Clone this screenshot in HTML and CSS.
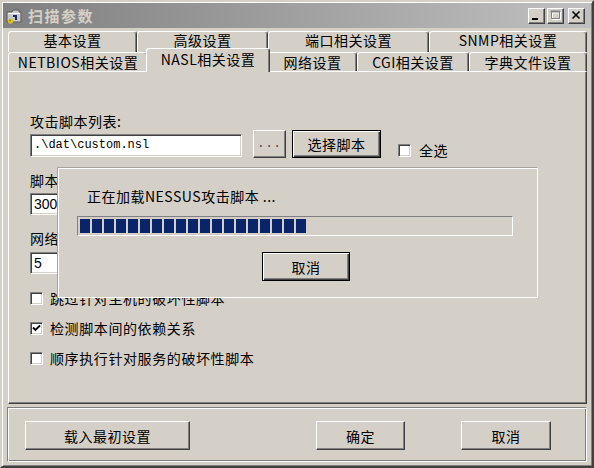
FILE: index.html
```html
<!DOCTYPE html>
<html lang="zh-CN">
<head>
    <meta charset="UTF-8">
    <title>扫描参数</title>
    <link rel="stylesheet" href="styles.css">
</head>
<body>
<div class="win">
    <div class="caption">
        <svg class="app-icon" width="16" height="16" viewBox="0 0 16 16">
            <path d="M1 4 L6 4 L7 2 L13 2 L13 4 L15 4 L15 14 L1 14 Z" fill="#c8c8c8" stroke="#5a5a5a" stroke-width="1"/>
            <rect x="2" y="5" width="12" height="1" fill="#ffffff"/>
            <path d="M7 7 L11 7 L11 12 L9 12 L9 9 L7 9 Z" fill="#1c2a6a"/>
            <circle cx="4.5" cy="13" r="2.6" fill="#e2c21c"/>
            <circle cx="4" cy="12.4" r="1" fill="#7a9a20"/>
        </svg>
        <span class="caption-text">扫描参数</span>
        <div class="caption-btns">
            <span class="cbtn">
                <svg width="15" height="14" viewBox="0 0 15 14"><rect x="3" y="9" width="6" height="2" fill="#000"/></svg>
            </span>
            <span class="cbtn">
                <svg width="15" height="14" viewBox="0 0 15 14">
                    <path d="M4.5 3.5 h8 v7 h-8 Z M4 3 h9 v1 h-9 Z" fill="none" stroke="#ffffff" stroke-width="1"/>
                    <path d="M3.5 2.5 h8 v7 h-8 Z M3 2 h9 v1 h-9 Z" fill="none" stroke="#808080" stroke-width="1"/>
                </svg>
            </span>
            <span class="cbtn close">
                <svg width="15" height="14" viewBox="0 0 15 14"><path d="M3.5 2.5 L10.5 9.5 M10.5 2.5 L3.5 9.5" stroke="#000" stroke-width="1.7"/></svg>
            </span>
        </div>
    </div>

    <div class="client">
        <div class="tabrow back">
            <div class="tab">基本设置</div>
            <div class="tab">高级设置</div>
            <div class="tab">端口相关设置</div>
            <div class="tab">SNMP相关设置</div>
        </div>
        <div class="tabrow front">
            <div class="tab">NETBIOS相关设置</div>
            <div class="tab sel">NASL相关设置</div>
            <div class="tab">网络设置</div>
            <div class="tab">CGI相关设置</div>
            <div class="tab">字典文件设置</div>
        </div>

        <div class="panel">
            <div class="lbl">攻击脚本列表:</div>
            <div class="script-row">
                <div class="edit path">.\dat\custom.nsl</div>
                <div class="btn dots">...</div>
                <div class="btn default choose">选择脚本</div>
                <div class="chk all"><span class="box"></span>全选</div>
            </div>
            <div class="lbl gap-a">脚本超时(秒):</div>
            <div class="edit num first">300</div>
            <div class="lbl gap-b">网络超时(秒):</div>
            <div class="edit num second">5</div>
            <div class="checks">
                <div class="chk"><span class="box"></span>跳过针对主机的破坏性脚本</div>
                <div class="chk"><span class="box"><svg width="9" height="9" viewBox="0 0 9 9"><path d="M1 3.5 L3.5 6 L8 1.5" fill="none" stroke="#000" stroke-width="1.8"/></svg></span>检测脚本间的依赖关系</div>
                <div class="chk"><span class="box"></span>顺序执行针对服务的破坏性脚本</div>
            </div>

            <div class="loading">
                <div class="loading-text">正在加载NESSUS攻击脚本 ...</div>
                <div class="progress"><div class="progress-fill" style="width:228px"></div></div>
                <div class="btn default cancel">取消</div>
            </div>
        </div>

        <div class="footer">
            <div class="btn reset">载入最初设置</div>
            <div class="btn ok">确定</div>
            <div class="btn quit">取消</div>
        </div>
    </div>
</div>
</body>
</html>
```

FILE: styles.css
```css
* {margin:0; padding:0; box-sizing:border-box;}

body {background:#d4d0c8; font-family:"Noto Sans CJK SC", "Liberation Sans", sans-serif; font-size:14px; color:#000;}

/* window frame */
.win {width:594px; height:468px; padding:1px; background:#d4d0c8;
    border:2px solid; border-color:#d4d0c8 #404040 #404040 #d4d0c8;
    box-shadow:inset 1px 1px #fff, inset -1px -1px #808080;}

.caption {height:25px; display:flex; align-items:center; padding:0 6px 0 3px;
    background:linear-gradient(to right, #808080, #c0c0c0);}
.app-icon {display:block; margin-top:1px;}
.caption-text {margin-left:6px; font-size:15px; font-weight:bold; line-height:25px; color:#d4d0c8; letter-spacing:1.5px;}
.caption-btns {margin-left:auto; display:flex;}
.cbtn {width:17px; height:16px; margin-left:2px; background:#d4d0c8;
    border:1px solid; border-color:#fff #404040 #404040 #fff; box-shadow:inset -1px -1px #808080;}
.cbtn svg {display:block;}
.cbtn.close {margin-left:4px;}

.client {padding:3px 4px 0 5px;}

/* tabs */
.tabrow {display:grid;}
.tabrow.back {grid-template-columns:129px 131px 161px 158px; height:21px;}
.tabrow.front {grid-template-columns:140px 120px 89px 112px 118px; height:19px;}
.tab {display:flex; align-items:center; justify-content:center; white-space:nowrap;
    letter-spacing:0.5px; background:#d4d0c8;
    border-top:1px solid #fff; border-left:1px solid #fff; border-right:1px solid #404040;
    border-radius:3px 3px 0 0; box-shadow:inset -1px 0 #808080;}
.back .tab {line-height:14px; padding-bottom:4px;}
.front .tab {line-height:17px;}
.tab.sel {position:relative; z-index:2; margin:-4px -2px -1px; padding-bottom:3px;}

/* page */
.panel {position:relative; height:333px; padding:41px 0 0 21px;
    border:1px solid; border-color:#fff #404040 #404040 #fff; box-shadow:inset -1px -1px #808080;}

.lbl {line-height:17px; letter-spacing:0.5px;}
.gap-a {margin-top:14px;}
.gap-b {margin-top:15px;}

.edit {background:#fff; border:1px solid; border-color:#808080 #fff #fff #808080;
    box-shadow:inset 1px 1px #404040, inset -1px -1px #d4d0c8;}
.path {width:212px; height:23px; margin-top:4px; padding-left:3px;
    font-family:"Liberation Mono", monospace; font-size:12px; line-height:21px;}
.num {width:60px; height:22px; padding-left:3px; font-family:"Liberation Sans", sans-serif; line-height:20px;}
.num.first {margin-top:4px;}
.num.second {margin-top:5px;}

.script-row {display:flex; align-items:flex-start; height:28px;}

.btn {display:flex; align-items:center; justify-content:center; background:#d4d0c8; letter-spacing:0.5px;
    border:1px solid; border-color:#fff #404040 #404040 #fff; box-shadow:inset -1px -1px #808080;}
.btn.default {border-color:#000; box-shadow:inset 1px 1px #fff, inset -1px -1px #404040, inset -2px -2px #808080;}
.dots {width:33px; height:28px; margin-left:11px; font-family:"Liberation Mono", monospace; font-size:12px; color:#404040; letter-spacing:1px;}
.choose {width:89px; height:28px; margin-left:6px;}

.chk {display:flex; align-items:center; gap:7px; line-height:16px; letter-spacing:0.6px; white-space:nowrap;}
.chk.all {margin:12px 0 0 17px; gap:8px;}
.box {width:13px; height:13px; flex:none; display:flex; align-items:center; justify-content:center; background:#fff;
    border:1px solid; border-color:#808080 #fff #fff #808080; box-shadow:inset 1px 1px #404040, inset -1px -1px #d4d0c8;}
.box svg {display:block;}
.checks {margin-top:16px; display:flex; flex-direction:column; gap:14px;}

/* loading dialog lying over the page */
.loading {position:absolute; left:49px; top:96px; width:480px; height:130px; padding:19px 0 0 18px;
    background:#d4d0c8; border:1px solid #fff; box-shadow:-1px -1px 0 #a8a49c;}
.loading-text {margin-left:10px; line-height:16px; letter-spacing:0.5px;}
.progress {width:436px; height:20px; margin-top:12px; padding:2px 0 2px 2px;
    border:1px solid; border-color:#808080 #fff #fff #808080;}
.progress-fill {height:100%; background:repeating-linear-gradient(to right, #0a246a 0 10px, transparent 10px 12px);}
.cancel {width:88px; height:29px; margin:16px 0 0 185px;}

/* bottom buttons */
.footer {display:flex; width:580px; height:55px; margin:3px 0 0 -1px; padding:13px 0 0 17px;
    border:1px solid; border-color:#808080 #fff #fff #808080;
    box-shadow:inset 1px 1px #fff, inset -1px -1px #808080;}
.footer .btn {height:29px;}
.reset {width:165px;}
.ok {width:89px; margin-left:126px;}
.quit {width:90px; margin-left:56px;}
```
